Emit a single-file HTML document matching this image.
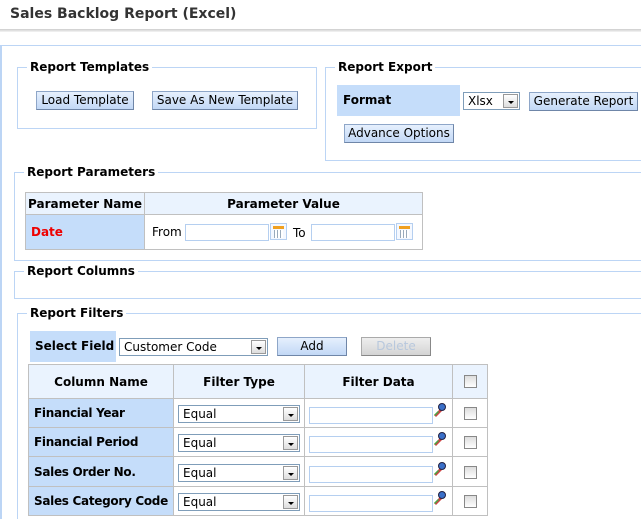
<!DOCTYPE html>
<html><head><meta charset="utf-8"><style>
*{box-sizing:border-box;margin:0;padding:0}
html,body{width:641px;height:519px;overflow:hidden}
body{background:#fff;font-family:"DejaVu Sans","Liberation Sans",sans-serif;font-size:12px;color:#000;position:relative}
.a{position:absolute}
.fs{position:absolute;border:1px solid #bcd5f5}
.lg{position:absolute;background:#fff;font-weight:bold;padding:0 3px;top:-9px;line-height:16px;white-space:nowrap}
.btn{position:absolute;height:19px;border:1px solid #8ea6c8;border-right-color:#6f86a8;border-bottom-color:#6f86a8;background:linear-gradient(#e6f0fd,#c2d8f6);text-align:center;line-height:17px;font-size:12px;white-space:nowrap}
.lb{position:absolute;background:#c5ddfa;font-weight:bold}
.inp{position:absolute;border:1px solid #b5cff0;background:#fff;height:17px}
.sel{position:absolute;border:1px solid #7f9db9;background:#fff;height:18px;line-height:16px;padding-left:4px}
.sel i{position:absolute;right:1px;top:1px;width:15px;height:14px;border:1px solid #999;background:linear-gradient(#fff,#ddd)}
.sel i:after{content:"";position:absolute;left:4px;top:6px;border:3px solid transparent;border-top:3px solid #000;border-bottom:0}
.cb{position:absolute;width:13px;height:13px;border:1px solid #888;background:linear-gradient(#ddd,#fff)}
.cal{position:absolute;width:17px;height:17px;border:1px solid #b5cff0;background:#f4f8ff}
.cal:before{content:"";position:absolute;left:2px;top:2px;width:11px;height:3px;background:#f0a020}
.cal:after{content:"";position:absolute;left:3px;top:6px;width:9px;height:8px;background:repeating-linear-gradient(90deg,#9ab 0 1px,#fff 1px 3px)}
.mag{position:absolute;width:14px;height:14px}
table{position:absolute;border-collapse:collapse;table-layout:fixed}
td,th{border:1px solid #c0c0c0;padding:0;white-space:nowrap}
th{background:#eaf3fe;font-weight:bold}
td.n{background:#c5ddfa;font-weight:bold;padding-left:5px;letter-spacing:-0.3px}
</style></head><body>
<div class="a" style="left:10px;top:6px;font-size:14px;font-weight:bold;color:#333">Sales Backlog Report (Excel)</div>
<div class="a" style="left:0;top:29px;width:641px;height:3px;background:linear-gradient(#ccc,#f4f4f4)"></div>
<div class="a" style="left:0;top:45px;width:660px;height:480px;border-left:2px solid #bcd5f5;border-top:1px solid #bcd5f5"></div>

<div class="fs" style="left:17px;top:67px;width:300px;height:62px"><div class="lg" style="left:9px">Report Templates</div></div>
<div class="btn" style="left:36px;top:91px;width:98px">Load Template</div>
<div class="btn" style="left:152px;top:91px;width:146px">Save As New Template</div>

<div class="fs" style="left:325px;top:67px;width:330px;height:94px"><div class="lg" style="left:9px">Report Export</div></div>
<div class="lb" style="left:337px;top:85px;width:123px;height:31px;line-height:31px;padding-left:6px">Format</div>
<div class="sel" style="left:463px;top:92px;width:57px">Xlsx<i></i></div>
<div class="btn" style="left:529px;top:92px;width:109px">Generate Report</div>
<div class="btn" style="left:344px;top:124px;width:110px">Advance Options</div>

<div class="fs" style="left:14px;top:172px;width:650px;height:89px"><div class="lg" style="left:9px">Report Parameters</div></div>
<table style="left:25px;top:192px;width:398px">
<tr style="height:22px"><th style="width:119px">Parameter Name</th><th>Parameter Value</th></tr>
<tr style="height:35px"><td style="background:#c5ddfa;color:#e00;font-weight:bold;padding-left:5px">Date</td><td style="padding-left:7px">From</td></tr>
</table>
<div class="inp" style="left:185px;top:224px;width:84px"></div>
<div class="cal" style="left:270px;top:223px"></div>
<div class="a" style="left:293px;top:226px">To</div>
<div class="inp" style="left:311px;top:224px;width:84px"></div>
<div class="cal" style="left:396px;top:223px"></div>

<div class="fs" style="left:14px;top:271px;width:650px;height:28px"><div class="lg" style="left:9px">Report Columns</div></div>

<div class="fs" style="left:17px;top:313px;width:650px;height:230px"><div class="lg" style="left:9px">Report Filters</div></div>
<div class="lb" style="left:30px;top:331px;width:86px;height:31px;line-height:31px;padding-left:5px">Select Field</div>
<div class="sel" style="left:119px;top:338px;width:149px">Customer Code<i></i></div>
<div class="btn" style="left:277px;top:337px;width:70px">Add</div>
<div class="btn" style="left:361px;top:337px;width:70px;background:linear-gradient(#eee,#d4d4d4);border-color:#aaa #888 #888 #aaa;color:#b8c8dd">Delete</div>
<table style="left:28px;top:364px;width:460px">
<tr style="height:34px"><th style="width:145px">Column Name</th><th style="width:131px">Filter Type</th><th style="width:148px">Filter Data</th><th></th></tr>
<tr style="height:29px"><td class="n">Financial Year</td><td></td><td></td><td></td></tr>
<tr style="height:29px"><td class="n">Financial Period</td><td></td><td></td><td></td></tr>
<tr style="height:30px"><td class="n">Sales Order No.</td><td></td><td></td><td></td></tr>
<tr style="height:29px"><td class="n">Sales Category Code</td><td></td><td></td><td></td></tr>
</table>
<div class="cb" style="left:464px;top:375px"></div>

<div class="sel" style="left:178px;top:405px;width:122px">Equal<i></i></div>
<div class="inp" style="left:309px;top:407px;width:124px"></div>
<svg class="mag" style="left:433px;top:403px" viewBox="0 0 14 14"><path d="M1 12 L8 5 L10 7 L3 14Z" fill="#c44"/><path d="M1 12 L5 8 L6 9 L2 13Z" fill="#4a4"/><circle cx="9" cy="4" r="3.5" fill="#3a6fc8" stroke="#224"/></svg>
<div class="cb" style="left:464px;top:407px"></div>

<div class="sel" style="left:178px;top:434px;width:122px">Equal<i></i></div>
<div class="inp" style="left:309px;top:436px;width:124px"></div>
<svg class="mag" style="left:433px;top:432px" viewBox="0 0 14 14"><path d="M1 12 L8 5 L10 7 L3 14Z" fill="#c44"/><path d="M1 12 L5 8 L6 9 L2 13Z" fill="#4a4"/><circle cx="9" cy="4" r="3.5" fill="#3a6fc8" stroke="#224"/></svg>
<div class="cb" style="left:464px;top:436px"></div>

<div class="sel" style="left:178px;top:464px;width:122px">Equal<i></i></div>
<div class="inp" style="left:309px;top:466px;width:124px"></div>
<svg class="mag" style="left:433px;top:462px" viewBox="0 0 14 14"><path d="M1 12 L8 5 L10 7 L3 14Z" fill="#c44"/><path d="M1 12 L5 8 L6 9 L2 13Z" fill="#4a4"/><circle cx="9" cy="4" r="3.5" fill="#3a6fc8" stroke="#224"/></svg>
<div class="cb" style="left:464px;top:466px"></div>

<div class="sel" style="left:178px;top:493px;width:122px">Equal<i></i></div>
<div class="inp" style="left:309px;top:495px;width:124px"></div>
<svg class="mag" style="left:433px;top:491px" viewBox="0 0 14 14"><path d="M1 12 L8 5 L10 7 L3 14Z" fill="#c44"/><path d="M1 12 L5 8 L6 9 L2 13Z" fill="#4a4"/><circle cx="9" cy="4" r="3.5" fill="#3a6fc8" stroke="#224"/></svg>
<div class="cb" style="left:464px;top:495px"></div>
</body></html>
